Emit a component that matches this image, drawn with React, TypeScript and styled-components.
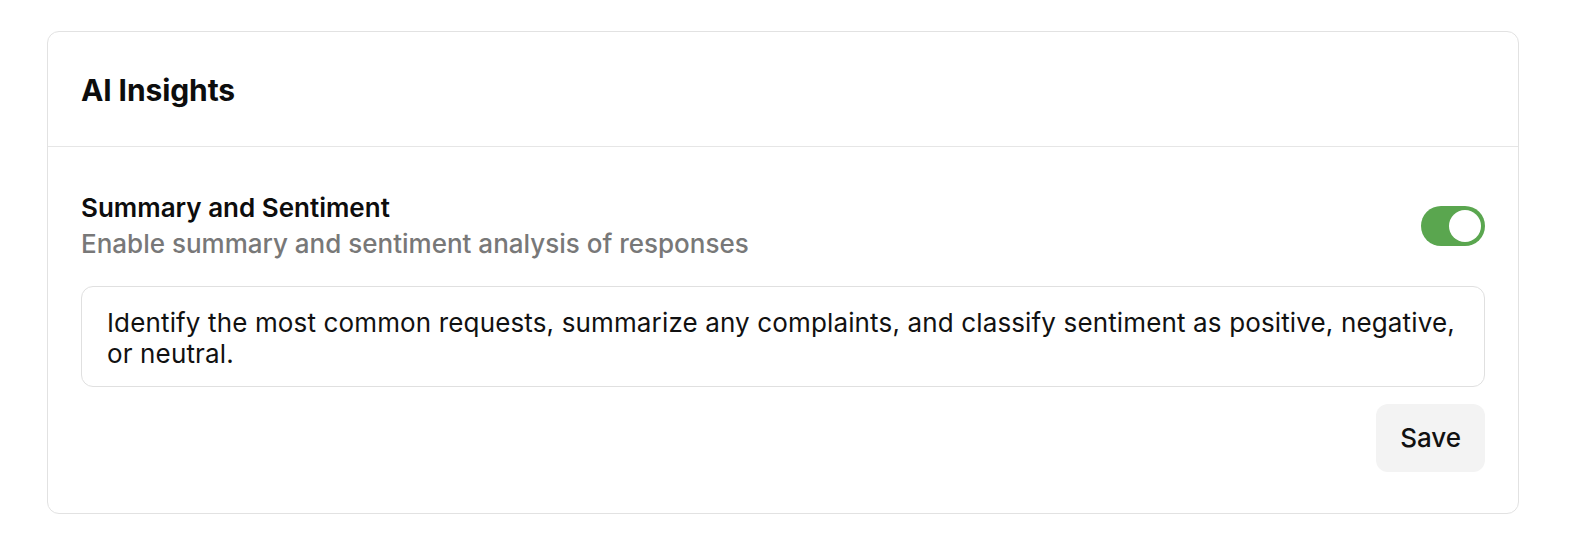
import React, { useState } from "react";
import styled, { createGlobalStyle } from "styled-components";

const GlobalStyle = createGlobalStyle`
  html, body {
    margin: 0;
    padding: 0;
    background: #ffffff;
  }
  body {
    font-family: Inter, "Noto Sans", "Liberation Sans", sans-serif;
    color: #111111;
    -webkit-font-smoothing: antialiased;
  }
`;

const Page = styled.div`
  padding: 31px 0 36px 47px;
`;

const Card = styled.section`
  width: 1472px;
  box-sizing: border-box;
  border: 1px solid #e2e2e2;
  border-radius: 12px;
  background: #ffffff;
`;

const CardHeader = styled.header`
  padding: 40px 33px 38px;
  border-bottom: 1px solid #e6e6e6;
`;

const Title = styled.h2`
  margin: 0;
  font-size: 30px;
  line-height: 36px;
  font-weight: 700;
  letter-spacing: -0.1px;
  color: #0d0d0d;
`;

const CardBody = styled.div`
  padding: 45px 33px 41px;
  display: flex;
  flex-direction: column;
`;

const SettingRow = styled.div`
  display: flex;
  align-items: center;
  justify-content: space-between;
`;

const SettingText = styled.div`
  display: flex;
  flex-direction: column;
  gap: 4px;
`;

const SettingTitle = styled.div`
  font-size: 26px;
  line-height: 32px;
  font-weight: 600;
  color: #0d0d0d;
`;

const SettingDesc = styled.div`
  font-size: 26px;
  line-height: 32px;
  font-weight: 500;
  color: #787878;
`;

const Toggle = styled.button<{ $on: boolean }>`
  width: 64px;
  height: 40px;
  border: none;
  padding: 4px;
  border-radius: 20px;
  background: ${(p) => (p.$on ? "#5aa64f" : "#d4d4d4")};
  display: flex;
  justify-content: ${(p) => (p.$on ? "flex-end" : "flex-start")};
  align-items: center;
  cursor: pointer;
  flex-shrink: 0;
`;

const Knob = styled.span`
  width: 32px;
  height: 32px;
  border-radius: 50%;
  background: #ffffff;
`;

const Prompt = styled.div`
  margin-top: 26px;
  box-sizing: border-box;
  border: 1px solid #e0e0e0;
  border-radius: 12px;
  padding: 20px 22px 17px 25px;
  font-size: 26px;
  letter-spacing: 0.14px;
  line-height: 31px;
  font-weight: 400;
  color: #111111;
`;

const Actions = styled.div`
  margin-top: 17px;
  display: flex;
  justify-content: flex-end;
`;

const SaveButton = styled.button`
  font-family: inherit;
  font-size: 26px;
  font-weight: 500;
  line-height: 32px;
  color: #111111;
  background: #f3f3f3;
  border: none;
  border-radius: 12px;
  padding: 18px 24px;
  cursor: pointer;
`;

export default function App() {
  const [on, setOn] = useState(true);
  return (
    <>
      <GlobalStyle />
      <Page>
        <Card>
          <CardHeader>
            <Title>AI Insights</Title>
          </CardHeader>
          <CardBody>
            <SettingRow>
              <SettingText>
                <SettingTitle>Summary and Sentiment</SettingTitle>
                <SettingDesc>Enable summary and sentiment analysis of responses</SettingDesc>
              </SettingText>
              <Toggle $on={on} onClick={() => setOn(!on)} aria-label="Toggle summary and sentiment">
                <Knob />
              </Toggle>
            </SettingRow>
            <Prompt>
              Identify the most common requests, summarize any complaints, and classify sentiment as positive, negative, or neutral.
            </Prompt>
            <Actions>
              <SaveButton>Save</SaveButton>
            </Actions>
          </CardBody>
        </Card>
      </Page>
    </>
  );
}
